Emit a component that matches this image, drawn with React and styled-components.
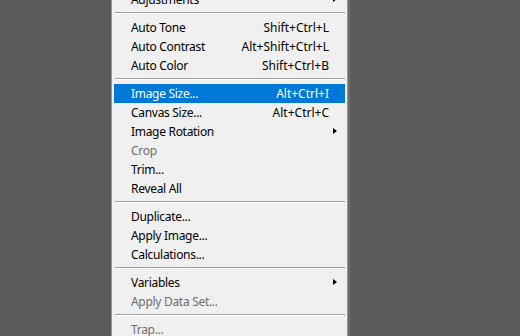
import React from "react";
import styled, { createGlobalStyle } from "styled-components";

const Global = createGlobalStyle`
  html, body { margin: 0; padding: 0; }
  body { background: #5a5a5a; width: 520px; height: 336px; overflow: hidden; }
`;

const Page = styled.div`
  width: 520px;
  height: 336px;
  overflow: hidden;
  position: relative;
  background: #5a5a5a;
`;

const Menu = styled.div`
  position: absolute;
  left: 111px;
  top: -10px;
  width: 237px;
  box-sizing: border-box;
  background: #f0f0f0;
  border: 1px solid #979797;
  border-top: none;
  box-shadow: 2px 0 0 #6a6a6a, 3px 0 0 #616161;
  padding: 0 1px 0 0;
  font-family: "Noto Sans", "Open Sans", sans-serif;
  font-size: 12px;
  color: #000;
`;

const Row = styled.div`
  position: relative;
  display: grid;
  grid-template-columns: 1fr auto;
  align-items: center;
  height: 19px;
  line-height: 19px;
  margin: 0 1px 0 2px;
  padding: 0 16px 0 17px;
  white-space: nowrap;
  background: ${(p) => (p.$active ? "#0078d7" : "transparent")};
  color: ${(p) => (p.$active ? "#fff" : p.$disabled ? "#6d6d6d" : "#000")};
`;

const Label = styled.span`
  letter-spacing: -0.3px;
`;

const Shortcut = styled.span`
  text-align: right;
`;

const Arrow = styled.span`
  position: absolute;
  right: 8px;
  top: 6px;
  width: 0;
  height: 0;
  border-top: 3.5px solid transparent;
  border-bottom: 3.5px solid transparent;
  border-left: 4px solid #000;
`;

const Separator = styled.div`
  height: 9px;
  display: flex;
  flex-direction: column;
  padding: 3px 1px 0 3px;
  box-sizing: border-box;
  &::before {
    content: "";
    display: block;
    height: 0;
    border-top: 1px solid #a0a0a0;
    border-bottom: 1px solid #ffffff;
  }
`;

const items = [
  { label: "Adjustments", sub: true },
  "sep",
  { label: "Auto Tone", sc: "Shift+Ctrl+L" },
  { label: "Auto Contrast", sc: "Alt+Shift+Ctrl+L" },
  { label: "Auto Color", sc: "Shift+Ctrl+B" },
  "sep",
  { label: "Image Size...", sc: "Alt+Ctrl+I", active: true },
  { label: "Canvas Size...", sc: "Alt+Ctrl+C" },
  { label: "Image Rotation", sub: true },
  { label: "Crop", disabled: true },
  { label: "Trim..." },
  { label: "Reveal All" },
  "sep",
  { label: "Duplicate..." },
  { label: "Apply Image..." },
  { label: "Calculations..." },
  "sep",
  { label: "Variables", sub: true },
  { label: "Apply Data Set...", disabled: true },
  "sep",
  { label: "Trap...", disabled: true },
];

export default function App() {
  return (
    <Page>
      <Global />
      <Menu>
        {items.map((it, i) =>
          it === "sep" ? (
            <Separator key={i} />
          ) : (
            <Row key={i} $active={it.active} $disabled={it.disabled}>
              <Label>{it.label}</Label>
              <Shortcut>{it.sc || ""}</Shortcut>
              {it.sub && <Arrow />}
            </Row>
          )
        )}
      </Menu>
    </Page>
  );
}
